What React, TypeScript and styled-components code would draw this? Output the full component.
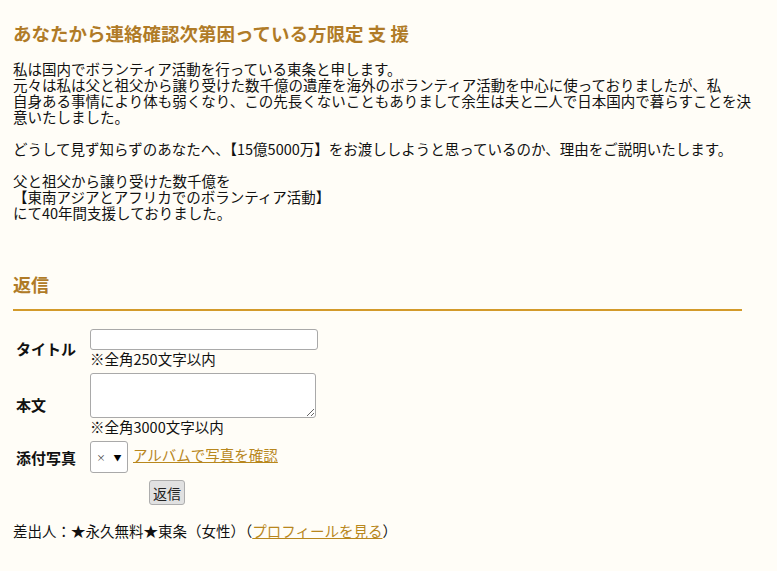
import React from "react";
import styled, { createGlobalStyle } from "styled-components";

const GlobalStyle = createGlobalStyle`
  html, body {
    margin: 0;
    padding: 0;
    background: #fffdf7;
  }
  body {
    font-family: "Noto Sans CJK JP", "Liberation Sans", sans-serif;
    font-size: 14.5px;
    color: #111;
  }
`;

const Page = styled.div`
  padding: 22px 35px 30px 13px;
  min-height: 571px;
  box-sizing: border-box;
`;

const Title = styled.h1`
  margin: 0;
  font-size: 18.5px;
  line-height: 22px;
  font-weight: bold;
  color: #b07b27;
  white-space: nowrap;
`;

const Body = styled.div`
  margin-top: 17px;
  font-size: 14.5px;
  line-height: 16px;
  white-space: nowrap;
`;

const Para = styled.p`
  margin: 0 0 16px;
`;

const SectionHead = styled.h2`
  margin: 52px 0 0;
  font-size: 18px;
  line-height: 22px;
  font-weight: bold;
  color: #b07b27;
  padding-bottom: 14px;
  border-bottom: 2px solid #d39a2a;
  width: 729px;
`;

const Form = styled.form`
  margin-top: 18px;
  display: flex;
  flex-direction: column;
  gap: 6px;
`;

const Row = styled.div`
  display: flex;
  align-items: center;
`;

const Label = styled.div`
  width: 77px;
  box-sizing: border-box;
  padding-left: 3px;
  font-weight: bold;
  font-size: 15px;
  white-space: nowrap;
`;

const Field = styled.div`
  display: flex;
  flex-direction: column;
`;

const TextInput = styled.input`
  width: 228px;
  height: 21px;
  box-sizing: border-box;
  border: 1px solid #a9a9a9;
  border-radius: 3px;
  background: #fff;
  margin: 0;
`;

const TextArea = styled.textarea`
  width: 226px;
  height: 45px;
  box-sizing: border-box;
  border: 1px solid #a9a9a9;
  border-radius: 3px;
  background: #fff;
  margin: 0;
  resize: both;
  display: block;
`;

const Note = styled.div`
  font-size: 14.5px;
  line-height: 17px;
`;

const SelectBox = styled.div`
  width: 38px;
  height: 32px;
  box-sizing: border-box;
  border: 1px solid #a9a9a9;
  border-radius: 3px;
  background: #fff;
  display: flex;
  align-items: center;
  justify-content: center;
  gap: 8px;
  font-size: 9px;
  color: #333;
`;

const Caret = styled.span`
  font-size: 8px;
  color: #000;
`;

const Link = styled.a`
  color: #b8871d;
  text-decoration: underline;
`;

const AlbumLink = styled(Link)`
  margin-left: 5px;
  align-self: flex-start;
  margin-top: 3px;
`;

const ButtonRow = styled.div`
  padding-left: 136px;
  margin-top: 1px;
`;

const Button = styled.button`
  width: 36px;
  height: 25px;
  padding: 0;
  font-family: inherit;
  font-size: 14px;
  background: #e1e1e1;
  border: 1px solid #adadad;
  border-radius: 3px;
  color: #222;
`;

const Sender = styled.div`
  margin-top: 18px;
  line-height: 16px;
  white-space: nowrap;
`;

export default function App() {
  return (
    <>
      <GlobalStyle />
      <Page>
        <Title>あなたから連絡確認次第困っている方限定 支 援</Title>
        <Body>
          <Para>
            私は国内でボランティア活動を行っている東条と申します。
            <br />
            元々は私は父と祖父から譲り受けた数千億の遺産を海外のボランティア活動を中心に使っておりましたが、私
            <br />
            自身ある事情により体も弱くなり、この先長くないこともありまして余生は夫と二人で日本国内で暮らすことを決
            <br />
            意いたしました。
          </Para>
          <Para>
            どうして見ず知らずのあなたへ、【15億5000万】をお渡ししようと思っているのか、理由をご説明いたします。
          </Para>
          <Para>
            父と祖父から譲り受けた数千億を
            <br />
            【東南アジアとアフリカでのボランティア活動】
            <br />
            にて40年間支援しておりました。
          </Para>
        </Body>
        <SectionHead>返信</SectionHead>
        <Form onSubmit={(e) => e.preventDefault()}>
          <Row>
            <Label>タイトル</Label>
            <Field>
              <TextInput type="text" />
              <Note>※全角250文字以内</Note>
            </Field>
          </Row>
          <Row>
            <Label>本文</Label>
            <Field>
              <TextArea />
              <Note>※全角3000文字以内</Note>
            </Field>
          </Row>
          <Row>
            <Label>添付写真</Label>
            <SelectBox>
              <span>×</span>
              <Caret>▼</Caret>
            </SelectBox>
            <AlbumLink href="#">アルバムで写真を確認</AlbumLink>
          </Row>
          <ButtonRow>
            <Button type="submit">返信</Button>
          </ButtonRow>
        </Form>
        <Sender>
          差出人：★永久無料★東条（女性）（<Link href="#">プロフィールを見る</Link>）
        </Sender>
      </Page>
    </>
  );
}
